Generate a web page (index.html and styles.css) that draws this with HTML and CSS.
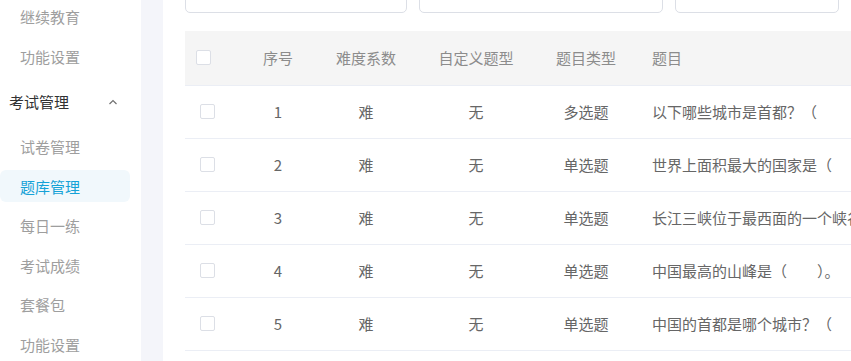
FILE: index.html
```html
<!DOCTYPE html>
<html lang="zh-CN">
<head>
<meta charset="utf-8">
<title>题库管理</title>
<link rel="stylesheet" href="styles.css">
</head>
<body>
<div class="app">
  <aside class="sidebar">
    <ul class="menu">
      <li class="item"><span class="link">继续教育</span></li>
      <li class="item"><span class="link">功能设置</span></li>
      <li class="group-title">
        <span>考试管理</span>
        <svg class="chev" width="10" height="6" viewBox="0 0 10 6"><path d="M1.5 5 L5 1.5 L8.5 5" fill="none" stroke="#707070" stroke-width="1.2"/></svg>
      </li>
      <li class="item"><span class="link">试卷管理</span></li>
      <li class="item"><span class="link active">题库管理</span></li>
      <li class="item"><span class="link">每日一练</span></li>
      <li class="item"><span class="link">考试成绩</span></li>
      <li class="item"><span class="link">套餐包</span></li>
      <li class="item"><span class="link">功能设置</span></li>
    </ul>
  </aside>
  <main class="main">
    <div class="toolbar">
      <div class="field f1"><span class="ph">请选择题型</span>
        <svg class="down" width="12" height="8" viewBox="0 0 12 8"><path d="M2 2 L6 6 L10 2" fill="none" stroke="#c0c4cc" stroke-width="1.2"/></svg>
      </div>
      <div class="field f2"></div>
      <div class="field f3"><span class="val">全部</span></div>
      <div class="field f4"></div>
    </div>
    <table class="grid">
      <colgroup>
        <col class="c-check"><col class="c-no"><col class="c-mid"><col class="c-mid"><col class="c-mid"><col class="c-title">
      </colgroup>
      <thead>
        <tr>
          <th class="chk head-chk"><span class="box"></span></th>
          <th>序号</th>
          <th>难度系数</th>
          <th>自定义题型</th>
          <th>题目类型</th>
          <th class="left">题目</th>
        </tr>
      </thead>
      <tbody>
        <tr><td class="chk"><span class="box"></span></td><td>1</td><td>难</td><td>无</td><td>多选题</td><td class="left">以下哪些城市是首都？（</td></tr>
        <tr><td class="chk"><span class="box"></span></td><td>2</td><td>难</td><td>无</td><td>单选题</td><td class="left">世界上面积最大的国家是（</td></tr>
        <tr><td class="chk"><span class="box"></span></td><td>3</td><td>难</td><td>无</td><td>单选题</td><td class="left">长江三峡位于最西面的一个峡谷是</td></tr>
        <tr><td class="chk"><span class="box"></span></td><td>4</td><td>难</td><td>无</td><td>单选题</td><td class="left">中国最高的山峰是（　　）。</td></tr>
        <tr><td class="chk"><span class="box"></span></td><td>5</td><td>难</td><td>无</td><td>单选题</td><td class="left">中国的首都是哪个城市？（</td></tr>
      </tbody>
    </table>
  </main>
</div>
</body>
</html>
```
FILE: styles.css
```css
* { box-sizing: border-box; }
html, body { margin: 0; padding: 0; }
body {
  width: 851px;
  height: 361px;
  overflow: hidden;
  background: #f4f5fa;
  font-family: "Noto Sans CJK SC", "Noto Sans", sans-serif;
}
.app {
  display: flex;
  align-items: flex-start;
  height: 361px;
}
.sidebar {
  width: 141px;
  flex: none;
  height: 361px;
  background: #ffffff;
}
.menu {
  list-style: none;
  margin: -3px 0 0 0;
  padding: 0;
}
.item {
  height: 39.5px;
  display: flex;
  align-items: center;
}
.link {
  display: flex;
  align-items: center;
  width: 130px;
  height: 32px;
  padding-left: 20px;
  font-size: 15px;
  color: #9e9e9e;
  border-radius: 6px;
}
.link.active {
  background: #f1f8fc;
  color: #16a2d7;
}
.group-title {
  height: 51px;
  display: flex;
  align-items: center;
  padding-left: 9px;
  font-size: 15px;
  color: #303133;
}
.group-title .chev {
  margin-left: 39px;
}
.main {
  margin-left: 22px;
  flex: 1;
  min-width: 0;
  height: 361px;
  background: #ffffff;
  padding-left: 22px;
  overflow: hidden;
}
.toolbar {
  display: flex;
  gap: 12px;
  margin-top: -27px;
  height: 40px;
}
.field {
  height: 40px;
  border: 1px solid #dcdfe6;
  border-radius: 5px;
  flex: none;
  position: relative;
  display: flex;
  align-items: center;
  padding-left: 19px;
  font-size: 15px;
}
.f1 { width: 222px; }
.f2 { width: 244px; }
.f3 { width: 164px; }
.f4 { width: 60px; }
.ph { color: #b4b6bc; margin-top: -6px; }
.val { color: #606266; margin-top: -6px; }
.down {
  position: absolute;
  right: 13px;
  top: 17px;
}
.grid {
  margin-top: 18px;
  border-collapse: collapse;
  table-layout: fixed;
  width: 700px;
  font-size: 15px;
}
.c-check { width: 60px; }
.c-no { width: 66px; }
.c-mid { width: 110px; }
.c-title { width: 244px; }
thead tr {
  background: #f5f5f5;
  height: 54px;
}
th {
  font-weight: normal;
  color: #8c8c8c;
  text-align: center;
  padding: 0;
  border-bottom: 1px solid #ebeef5;
  white-space: nowrap;
  overflow: hidden;
}
tbody tr { height: 53px; }
td {
  color: #666666;
  text-align: center;
  padding: 0;
  border-bottom: 1px solid #ebeef5;
  white-space: nowrap;
  overflow: hidden;
}
th.left, td.left {
  text-align: left;
  padding-left: 11px;
}
.chk {
  text-align: left;
  padding-left: 15px;
}
.head-chk { padding-left: 11px; }
.box {
  display: block;
  width: 15px;
  height: 15px;
  border: 1px solid #dcdfe6;
  border-radius: 2px;
  background: #ffffff;
}
```
